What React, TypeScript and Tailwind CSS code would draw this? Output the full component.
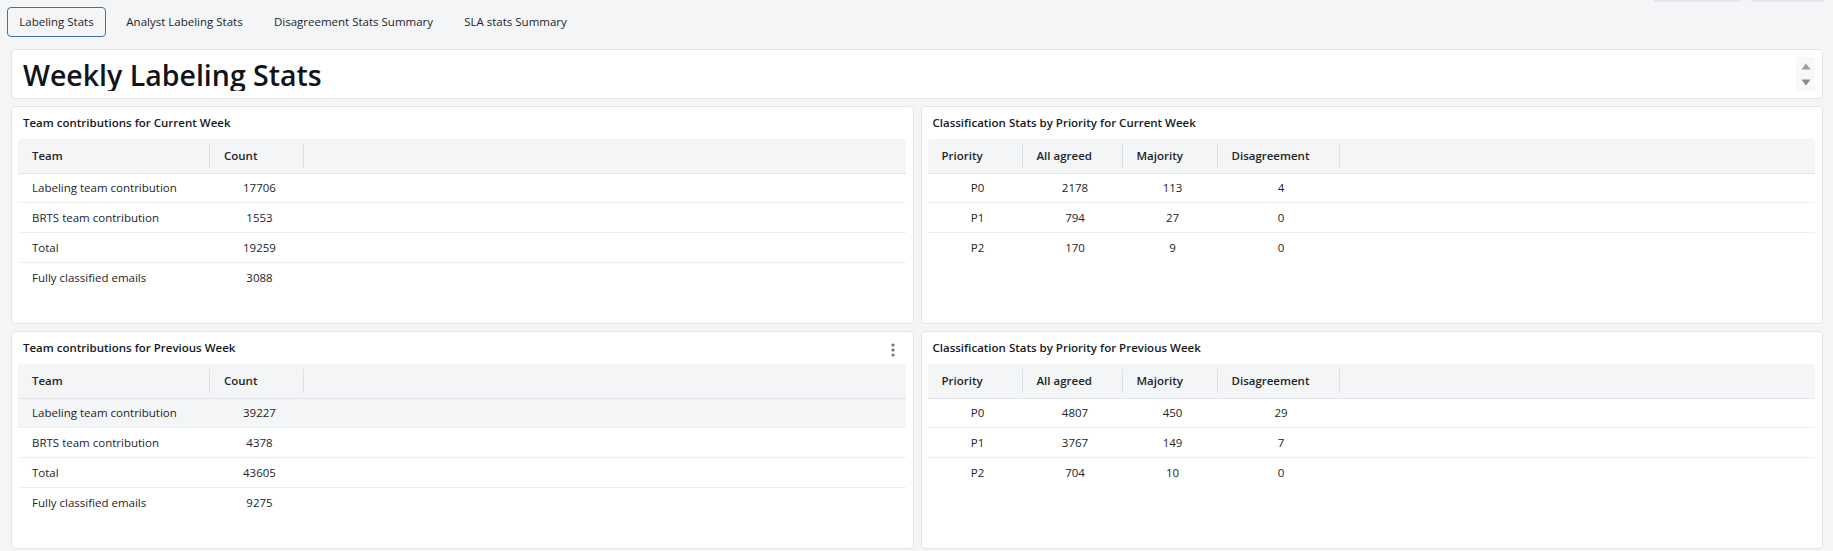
import React from "react";

const font = { fontFamily: '"Open Sans", "Noto Sans", Arial, sans-serif' };

type Col = { label: string; w: string };

function Kebab() {
  return (
    <svg width="6" height="14" viewBox="0 0 6 14" className="block">
      <circle cx="3" cy="2" r="1.6" fill="#6b7280" />
      <circle cx="3" cy="7" r="1.6" fill="#6b7280" />
      <circle cx="3" cy="12" r="1.6" fill="#6b7280" />
    </svg>
  );
}

function StatTable({
  cols,
  rows,
  firstLeft,
  hoverRow,
}: {
  cols: Col[];
  rows: string[][];
  firstLeft: boolean;
  hoverRow?: number;
}) {
  return (
    <div className="flex flex-col">
      <div className="flex h-[35px] bg-[#f4f5f7] border-b border-[#e2e4e7] rounded-t-[4px]">
        {cols.map((c) => (
          <div key={c.label} className={`${c.w} flex items-center justify-between shrink-0`}>
            <span className="pl-[14px] font-semibold text-[#212529]">{c.label}</span>
            <span className="w-px h-[24px] bg-[#dcdfe3]" />
          </div>
        ))}
        <div className="flex-1" />
      </div>
      {rows.map((r, i) => (
        <div
          key={i}
          className={`flex ${i === 0 ? "h-[29px]" : "h-[30px]"} items-center ${
            i < rows.length - 1 ? "border-b border-[#eceef0]" : ""
          } ${hoverRow === i ? "bg-[#f4f5f7]" : ""}`}
        >
          {r.map((v, j) => (
            <div
              key={j}
              className={`${cols[j].w} shrink-0 text-[#212529] ${
                j === 0 && firstLeft ? "pl-[14px]" : "pl-[5px] text-center"
              }`}
            >
              {v}
            </div>
          ))}
          <div className="flex-1" />
        </div>
      ))}
    </div>
  );
}

function Card({
  title,
  menu,
  children,
}: {
  title: string;
  menu?: boolean;
  children: React.ReactNode;
}) {
  return (
    <div className="h-[218px] bg-white border border-[#e3e5e8] rounded-[4px] pl-[6px] pr-[7px]">
      <div className="h-[32px] flex items-center justify-between pl-[5px]">
        <span className="font-semibold text-[#15191d]">{title}</span>
        {menu && (
          <span className="mr-[10px] mt-[3px]">
            <Kebab />
          </span>
        )}
      </div>
      {children}
    </div>
  );
}

const teamCols: Col[] = [
  { label: "Team", w: "w-[192px]" },
  { label: "Count", w: "w-[94px]" },
];

const prioCols: Col[] = [
  { label: "Priority", w: "w-[95px]" },
  { label: "All agreed", w: "w-[100px]" },
  { label: "Majority", w: "w-[95px]" },
  { label: "Disagreement", w: "w-[122px]" },
];

export default function App() {
  const tabs = [
    { label: "Labeling Stats", w: "w-[99px]", active: true },
    { label: "Analyst Labeling Stats", w: "w-[141px]" },
    { label: "Disagreement Stats Summary", w: "w-[181px]" },
    { label: "SLA stats Summary", w: "w-[127px]" },
  ];
  return (
    <div className="min-h-[551px] w-full bg-[#f4f5f7] text-[11.5px]" style={font}>
      <div className="flex items-start justify-between">
        <div className="flex gap-[8px] pt-[7px] pl-[7px]">
          {tabs.map((t) => (
            <div
              key={t.label}
              className={`${t.w} h-[30px] flex items-center justify-center rounded-[4px] text-[#212529] ${
                t.active ? "border border-[#3f70a9]" : ""
              }`}
            >
              {t.label}
            </div>
          ))}
        </div>
        <div className="flex gap-[11px] pr-[9px]">
          <div className="w-[87px] h-[2px] bg-[#e3e5e8] rounded-b-[3px]" />
          <div className="w-[73px] h-[2px] bg-[#e3e5e8] rounded-b-[3px]" />
        </div>
      </div>

      <div className="ml-[11px] mr-[10px] mt-[12px] flex flex-col gap-[7px]">
        <div className="h-[50px] bg-white border border-[#e3e5e8] rounded-[4px] p-[7px]">
          <div className="h-[34px] flex overflow-hidden">
            <div className="flex-1 overflow-hidden">
              <h1 className="pl-[4px] text-[28.5px] leading-[36px] font-semibold text-[#111418]">
                Weekly Labeling Stats
              </h1>
            </div>
            <div className="w-[19px] h-[34px] bg-[#f8f8f8] flex flex-col items-center justify-center gap-[9px]">
              <svg width="10" height="7" viewBox="0 0 10 7">
                <path d="M5 0.5 L9.5 6.5 L0.5 6.5 Z" fill="#9c9c9c" />
              </svg>
              <svg width="10" height="7" viewBox="0 0 10 7">
                <path d="M0.5 0.5 L9.5 0.5 L5 6.5 Z" fill="#8a8a8a" />
              </svg>
            </div>
          </div>
        </div>

        <div className="grid grid-cols-2 gap-x-[7px] gap-y-[7px]">
          <Card title="Team contributions for Current Week">
            <StatTable
              cols={teamCols}
              firstLeft
              rows={[
                ["Labeling team contribution", "17706"],
                ["BRTS team contribution", "1553"],
                ["Total", "19259"],
                ["Fully classified emails", "3088"],
              ]}
            />
          </Card>
          <Card title="Classification Stats by Priority for Current Week">
            <StatTable
              cols={prioCols}
              firstLeft={false}
              rows={[
                ["P0", "2178", "113", "4"],
                ["P1", "794", "27", "0"],
                ["P2", "170", "9", "0"],
              ]}
            />
          </Card>
          <Card title="Team contributions for Previous Week" menu>
            <StatTable
              cols={teamCols}
              firstLeft
              hoverRow={0}
              rows={[
                ["Labeling team contribution", "39227"],
                ["BRTS team contribution", "4378"],
                ["Total", "43605"],
                ["Fully classified emails", "9275"],
              ]}
            />
          </Card>
          <Card title="Classification Stats by Priority for Previous Week">
            <StatTable
              cols={prioCols}
              firstLeft={false}
              rows={[
                ["P0", "4807", "450", "29"],
                ["P1", "3767", "149", "7"],
                ["P2", "704", "10", "0"],
              ]}
            />
          </Card>
        </div>
      </div>
    </div>
  );
}
